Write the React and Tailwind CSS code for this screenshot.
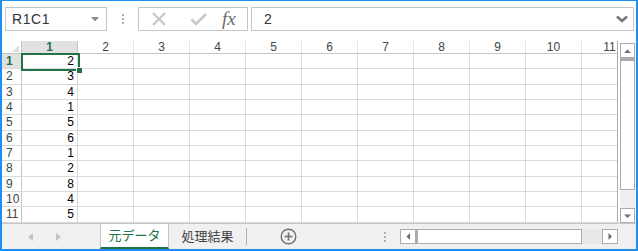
import React from "react";

const data = [2, 3, 4, 1, 5, 6, 1, 2, 8, 4, 5, ""];
const cols = [1, 2, 3, 4, 5, 6, 7, 8, 9, 10, 11];

function Dots() {
    return (
        <div className="flex flex-col gap-[2px] items-center">
            <span className="w-[2px] h-[2px] bg-[#b0b0b0]" />
            <span className="w-[2px] h-[2px] bg-[#b0b0b0]" />
            <span className="w-[2px] h-[2px] bg-[#b0b0b0]" />
        </div>
    );
}

function ArrowBox({ dir, className = "" }) {
    // small triangle arrow inside a bordered square
    const pts = {
        up: "1,5 4.5,1.5 8,5",
        down: "1,1.5 4.5,5 8,1.5",
        left: "5,1 1.5,4.5 5,8",
        right: "1.5,1 5,4.5 1.5,8",
    }[dir];
    const vert = dir === "up" || dir === "down";
    return (
        <div
            className={`flex items-center justify-center border border-[#ababab] bg-white ${className}`}
        >
            <svg width={vert ? 9 : 6} height={vert ? 6 : 9}>
                <polygon points={pts} fill="#6d6d6d" />
            </svg>
        </div>
    );
}

export default function App() {
    return (
        <div
            className="w-[638px] h-[251px] bg-white border-l-2 border-r-2 border-t border-b-2 border-[#1e8ff0] flex flex-col overflow-hidden"
            style={{ fontFamily: '"Liberation Sans", "Noto Sans CJK JP", sans-serif' }}
        >
            {/* toolbar */}
            <div className="h-[40px] flex items-start pt-[6px]">
                <div className="ml-[3px] w-[102px] h-[24px] border border-[#c6c6c6] flex items-center pl-[6px] pr-[6px] text-[14px] text-[#333]">
                    <span className="tracking-[0.6px]">R1C1</span>
                    <svg width="8" height="5" className="ml-auto mr-[1px]">
                        <polygon points="0,0 8,0 4,4.5" fill="#8a8a8a" />
                    </svg>
                </div>
                <div className="w-[31px] h-[24px] flex items-center justify-center">
                    <Dots />
                </div>
                <div className="w-[110px] h-[24px] border border-[#c6c6c6] flex items-center">
                    <svg width="14" height="14" className="ml-[13px]">
                        <path d="M1 1 L13 13 M13 1 L1 13" stroke="#c8c8c8" strokeWidth="2.2" />
                    </svg>
                    <svg width="17" height="14" className="ml-[24px]">
                        <path d="M1.5 7.5 L6 12 L16 2" stroke="#c8c8c8" strokeWidth="2.6" fill="none" />
                    </svg>
                    <span
                        className="ml-[15px] text-[19px] italic text-[#6b6b6b] leading-none -mt-[2px]"
                        style={{ fontFamily: '"Liberation Serif", serif' }}
                    >
                        fx
                    </span>
                </div>
                <div className="ml-[3px] w-[383px] h-[24px] border border-[#c6c6c6] flex items-center pl-[12px] pr-[5px] text-[14px] text-[#333]">
                    <span>2</span>
                    <svg width="12" height="8" className="ml-auto">
                        <path d="M1 1.5 L6 6 L11 1.5" stroke="#777" strokeWidth="2.6" fill="none" />
                    </svg>
                </div>
            </div>

            {/* grid + vertical scrollbar */}
            <div className="h-[182px] flex">
                <div className="relative w-[616px] h-full overflow-hidden border-r border-[#ababab] text-[12px] text-[#444]">
                    {/* header row */}
                    <div className="flex h-[13px] border-b border-[#c6c6c6]">
                        <div className="relative w-[20px] shrink-0 border-r border-[#c6c6c6]">
                            <svg width="7" height="7" className="absolute right-[2px] bottom-[1px]">
                                <polygon points="7,0 7,7 0,7" fill="#dcdcdc" />
                            </svg>
                        </div>
                        {cols.map((c) => (
                            <div
                                key={c}
                                className={`w-[56px] shrink-0 flex items-center justify-center leading-none border-r ${
                                    c === 1
                                        ? "bg-[#e1e1e1] text-[#217346] font-bold border-[#c6c6c6]"
                                        : "border-[#e6e6e6]"
                                }`}
                            >
                                {c}
                            </div>
                        ))}
                    </div>

                    {/* data rows */}
                    {data.map((v, i) => (
                        <div key={i} className="flex h-[15.33px] border-b border-[#d9d9d9]">
                            <div
                                className={`w-[20px] shrink-0 border-r border-[#c6c6c6] pl-[4px] flex items-center leading-none ${
                                    i === 0 ? "bg-[#e1e1e1] text-[#217346] font-bold" : ""
                                }`}
                            >
                                {i < 11 ? i + 1 : ""}
                            </div>
                            {cols.map((c) => (
                                <div
                                    key={c}
                                    className="w-[56px] shrink-0 border-r border-[#d9d9d9] flex items-center justify-end pr-[3px] leading-none text-black"
                                >
                                    {c === 1 ? v : ""}
                                </div>
                            ))}
                        </div>
                    ))}

                    {/* selected cell */}
                    <div className="absolute left-[19px] top-[12px] w-[59px] h-[18px] border-2 border-[#217346]" />
                    <div className="absolute left-[74px] top-[26px] w-[7px] h-[7px] bg-[#217346] border border-white" />
                </div>

                <div className="ml-[2px] w-[15px] flex flex-col pt-[2px]">
                    <ArrowBox dir="up" className="h-[15px]" />
                    <div className="h-[132px] border border-t-0 border-[#ababab] bg-white border-t-[3px] border-t-[#ababab]" />
                    <div className="flex-1 bg-[#efefef]" />
                    <ArrowBox dir="down" className="h-[15px]" />
                </div>
            </div>

            {/* sheet tabs */}
            <div className="flex-1 flex items-stretch bg-[#f0f0f0] border-t border-[#c6c6c6]">
                <div className="w-[98px] flex items-center">
                    <svg width="5" height="8" className="ml-[26px]">
                        <polygon points="5,0 0,4 5,8" fill="#c4c4c4" />
                    </svg>
                    <svg width="5" height="8" className="ml-[23px]">
                        <polygon points="0,0 5,4 0,8" fill="#c4c4c4" />
                    </svg>
                </div>
                <div className="w-[69px] bg-white border-l border-r border-[#c6c6c6] border-b-2 border-b-[#217346] flex items-center justify-center text-[13px] text-[#217346] pt-[1px]">
                    元データ
                </div>
                <div className="w-[77px] flex items-center justify-center text-[13px] text-[#444] pt-[1px]">
                    処理結果
                </div>
                <div className="w-px my-[4px] bg-[#b0b0b0]" />
                <div className="ml-[33px] flex items-center">
                    <svg width="17" height="17">
                        <circle cx="8.5" cy="8.5" r="7.3" stroke="#707070" strokeWidth="1.4" fill="none" />
                        <path d="M8.5 4.5 V12.5 M4.5 8.5 H12.5" stroke="#707070" strokeWidth="1.6" />
                    </svg>
                </div>
                <div className="ml-[87px] flex items-center">
                    <Dots />
                </div>
                <div className="ml-[14px] flex items-center">
                    <div className="flex h-[15px] w-[218px]">
                        <ArrowBox dir="left" className="w-[16px]" />
                        <div className="w-[167px] border-y border-r border-[#ababab] bg-white border-l-[3px] border-l-[#ababab] -ml-px" />
                        <div className="flex-1 bg-[#e9e9e9]" />
                        <ArrowBox dir="right" className="w-[16px]" />
                    </div>
                </div>
            </div>
        </div>
    );
}
